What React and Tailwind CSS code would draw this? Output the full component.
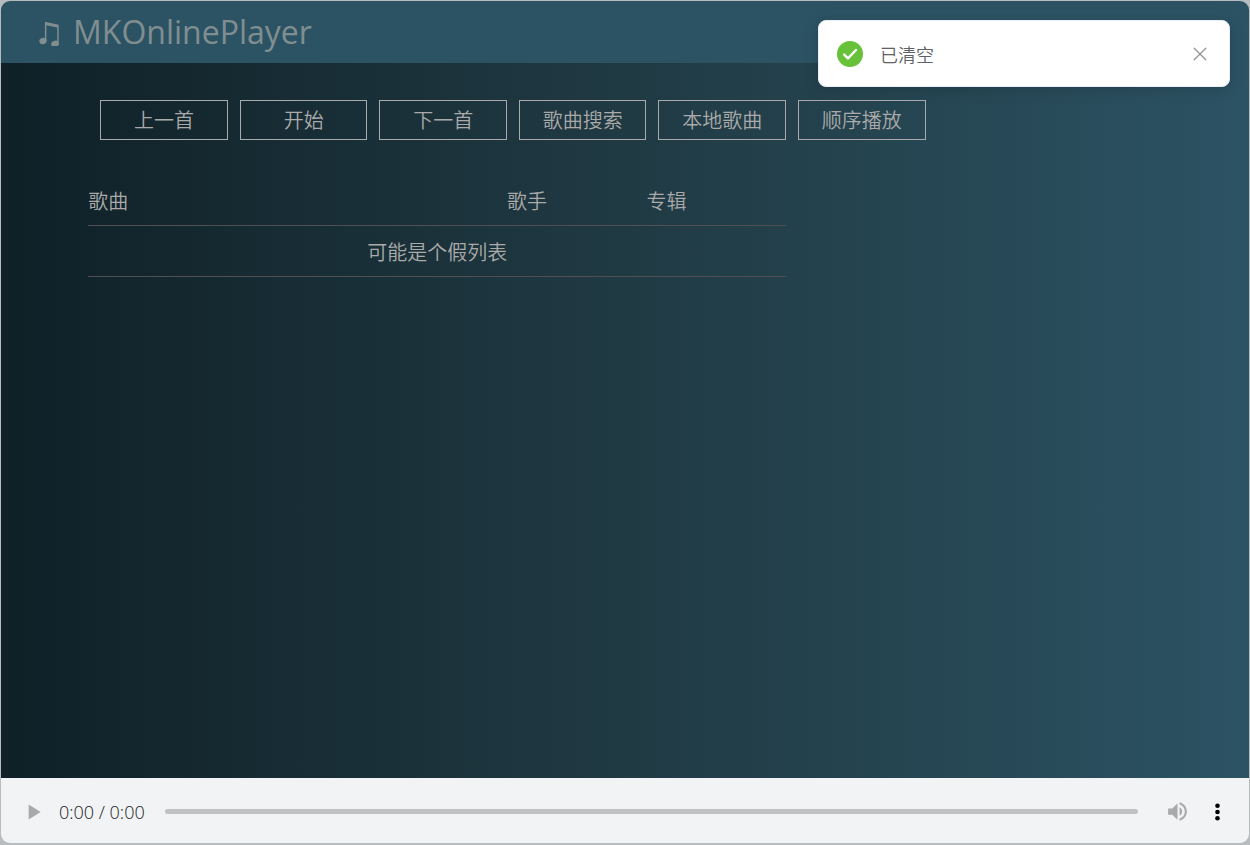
import React from "react";

const controls = ["上一首", "开始", "下一首", "歌曲搜索", "本地歌曲", "顺序播放"];

function Header() {
  return (
    <header className="flex h-[62px] shrink-0 items-center bg-[#2c5364] px-9 text-[#808e90]">
      <h1 className="flex items-center gap-3 font-['Open_Sans','Noto_Sans',sans-serif] text-[32px] leading-10">
        <svg viewBox="0 0 24 28" className="h-7 w-6" fill="currentColor" aria-hidden="true">
          <path d="M7.900 3.800 21.700 6.700V26H20.200V9.600L9.400 7.300V23H7.900z" />
          <ellipse cx="6" cy="23" rx="3.700" ry="3.100" transform="rotate(-20 6 23)" />
          <ellipse cx="18" cy="26" rx="3.900" ry="3.200" transform="rotate(-20 18 26)" />
        </svg>
        <span>MKOnlinePlayer</span>
      </h1>
    </header>
  );
}

function Toast() {
  return (
    <div
      role="alert"
      className="absolute top-5 right-5 flex h-[67px] w-[412px] items-center rounded-lg border border-[#ebeef5] bg-white pr-[19px] pl-[18px] shadow-[0_2px_16px_rgba(0,0,0,0.16)]"
    >
      <svg viewBox="0 0 26 26" className="h-[26px] w-[26px]" aria-hidden="true">
        <circle cx="13" cy="13" r="13" fill="#67c23a" />
        <path
          d="M7.2 13.6 11 17.3 19 9"
          fill="none"
          stroke="#fff"
          strokeWidth="2.4"
          strokeLinecap="round"
          strokeLinejoin="round"
        />
      </svg>
      <p className="ml-[17px] flex-1 text-lg font-[350] text-[#606266]">已清空</p>
      <button type="button" aria-label="关闭" className="flex h-5 w-5 items-center justify-center">
        <svg viewBox="0 0 14 14" className="h-[14px] w-[14px]" aria-hidden="true">
          <path d="M1.2 1.2 12.8 12.8M12.8 1.2 1.2 12.8" stroke="#909399" strokeWidth="1.3" strokeLinecap="round" />
        </svg>
      </button>
    </div>
  );
}

function SongTable() {
  return (
    <table className="mt-[35px] w-[65%] table-fixed border-collapse text-left">
      <colgroup>
        <col className="w-[60%]" />
        <col className="w-[20%]" />
        <col className="w-[20%]" />
      </colgroup>
      <thead>
        <tr className="h-[50px] border-b border-[#514f54]">
          <th className="p-0 pt-0.5 font-[350]">歌曲</th>
          <th className="p-0 pt-0.5 font-[350]">歌手</th>
          <th className="p-0 pt-0.5 font-[350]">专辑</th>
        </tr>
      </thead>
      <tbody>
        <tr className="h-[51px] border-b border-[#514f54]">
          <td colSpan={3} className="p-0 pt-0.5 text-center">
            可能是个假列表
          </td>
        </tr>
      </tbody>
    </table>
  );
}

function PlayerBar() {
  return (
    <footer className="flex h-[65px] shrink-0 items-center bg-[#f1f3f4] pt-0.5 pr-5 pl-[19px]">
      <button type="button" aria-label="播放" className="text-[#a8a9aa]">
        <svg viewBox="0 0 24 24" className="h-[26px] w-[26px]" fill="currentColor" aria-hidden="true">
          <path d="M8 5v14l11-7z" />
        </svg>
      </button>
      <span className="ml-[13px] font-['Open_Sans','Noto_Sans',sans-serif] text-lg font-[350] text-[#202124]">
        0:00 / 0:00
      </span>
      <input
        type="range"
        aria-label="播放进度"
        min="0"
        max="100"
        defaultValue="0"
        className="mr-[27px] ml-5 h-[5px] min-w-0 flex-1 appearance-none rounded-full bg-[#c0c1c2] [&::-webkit-slider-thumb]:h-0 [&::-webkit-slider-thumb]:w-0 [&::-webkit-slider-thumb]:appearance-none"
      />
      <button type="button" aria-label="静音" className="text-[#a8a9aa]">
        <svg viewBox="0 0 24 24" className="h-[25px] w-[25px]" fill="currentColor" aria-hidden="true">
          <path d="M3 9v6h4l5 5V4L7 9H3zm13.5 3c0-1.77-1.02-3.29-2.5-4.03v8.05c1.48-.73 2.5-2.25 2.5-4.02zM14 3.23v2.06c2.89.86 5 3.54 5 6.71s-2.11 5.85-5 6.71v2.06c4.01-.91 7-4.49 7-8.77s-2.99-7.86-7-8.77z" />
        </svg>
      </button>
      <button type="button" aria-label="更多选项" className="ml-[15px] text-black">
        <svg viewBox="0 0 24 24" className="h-6 w-6" fill="currentColor" aria-hidden="true">
          <circle cx="12.5" cy="5.8" r="2.3" />
          <circle cx="12.5" cy="12" r="2.3" />
          <circle cx="12.5" cy="18.2" r="2.3" />
        </svg>
      </button>
    </footer>
  );
}

export default function App() {
  return (
    <div className="flex min-h-screen bg-[#b9bcbf] px-px pt-px pb-0.5 font-['Noto_Sans_CJK_SC',sans-serif]">
      <div className="flex flex-1 flex-col overflow-hidden rounded-[9px]">
        <Header />
        <main className="flex-1 bg-linear-to-r/srgb from-[#0f2027] via-[#203a43] to-[#2c5364] px-[7%] pt-[37px] text-xl font-[350] text-[#aaaaaa]">
          <div className="grid w-[78%] grid-cols-6 gap-3 pl-3">
            {controls.map((label) => (
              <button key={label} type="button" className="h-10 border border-[#aaaaaa] whitespace-nowrap">
                {label}
              </button>
            ))}
          </div>
          <SongTable />
        </main>
        <PlayerBar />
      </div>
      <Toast />
    </div>
  );
}
